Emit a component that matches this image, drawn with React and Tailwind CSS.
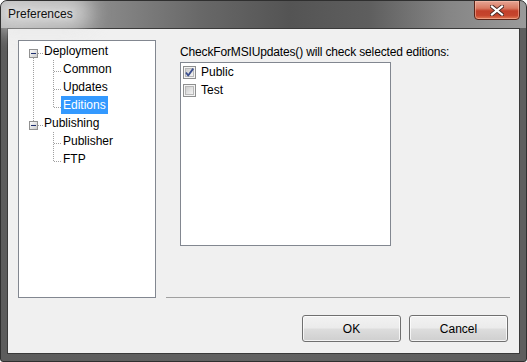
import React from "react";

const FONT = "font-['Liberation_Sans',Arial,sans-serif]";

function CheckBox({ checked }) {
  return (
    <svg width="13" height="13" viewBox="0 0 13 13" className="flex-none">
      <defs>
        <linearGradient id="cbfill" x1="0" y1="0" x2="1" y2="1">
          <stop offset="0" stopColor="#cbcbcb" />
          <stop offset="1" stopColor="#f6f6f6" />
        </linearGradient>
      </defs>
      <rect x="0.5" y="0.5" width="12" height="12" fill="#f4f4f4" stroke="#8e8f8f" />
      <rect x="2.5" y="2.5" width="8" height="8" fill="url(#cbfill)" stroke="#b8b8b8" />
      {checked && (
        <path d="M3 6.5 L5.2 9.5 L10.2 2.6" fill="none" stroke="#3b4f8f" strokeWidth="1.8" strokeLinejoin="round" />
      )}
    </svg>
  );
}

function Expander({ x, y }) {
  return (
    <g>
      <rect x={x + 0.5} y={y + 0.5} width="8" height="8" fill="url(#exfill)" stroke="#919191" shapeRendering="crispEdges" />
      <line x1={x + 2} y1={y + 4.5} x2={x + 7} y2={y + 4.5} stroke="#1f2f6f" shapeRendering="crispEdges" />
    </g>
  );
}

function TreeLines() {
  const dot = { stroke: "#a0a0a0", strokeDasharray: "1 1", shapeRendering: "crispEdges" };
  return (
    <svg width="138" height="258" className="pointer-events-none absolute left-0 top-0">
      <defs>
        <linearGradient id="exfill" x1="0" y1="0" x2="1" y2="1">
          <stop offset="0" stopColor="#ffffff" />
          <stop offset="1" stopColor="#c8c8c8" />
        </linearGradient>
      </defs>
      {/* root connector */}
      <line x1="14.5" y1="17" x2="14.5" y2="80" style={dot} />
      <line x1="19" y1="12.5" x2="24" y2="12.5" style={dot} />
      <line x1="19" y1="84.5" x2="24" y2="84.5" style={dot} />
      {/* Deployment children */}
      <line x1="34.5" y1="19" x2="34.5" y2="67" style={dot} />
      {[30, 48, 66].map((y) => (
        <line key={y} x1="35" y1={y + 0.5} x2="42" y2={y + 0.5} style={dot} />
      ))}
      {/* Publishing children */}
      <line x1="34.5" y1="91" x2="34.5" y2="121" style={dot} />
      {[102, 120].map((y) => (
        <line key={y} x1="35" y1={y + 0.5} x2="42" y2={y + 0.5} style={dot} />
      ))}
      <Expander x={10} y={8} />
      <Expander x={10} y={80} />
    </svg>
  );
}

function TreeRow({ label, level, selected }) {
  return (
    <div className={`flex h-[18px] items-center ${level === 0 ? "pl-[23px]" : "pl-[42px]"}`}>
      <span className={`px-[2px] leading-[18px] ${selected ? "bg-[#3399ff] text-white" : "text-black"}`}>{label}</span>
    </div>
  );
}

function Button({ children }) {
  return (
    <button className="flex h-[27px] w-[99px] items-center justify-center rounded-[3px] border border-[#707070] bg-[linear-gradient(to_bottom,#f2f2f2_0%,#ebebeb_48%,#dddddd_52%,#cfcfcf_100%)] text-[12px] text-black shadow-[inset_0_0_0_1px_rgba(255,255,255,0.75)]">
      {children}
    </button>
  );
}

export default function App() {
  return (
    <div className={`h-[362px] w-[527px] bg-white ${FONT} text-[12px]`}>
      <div className="flex h-[362px] w-[527px] flex-col overflow-hidden rounded-t-[7px] rounded-b-[3px] border border-[#2f2f2f] bg-[linear-gradient(to_right,#5c5c5c,#626262_50%,#5e5e5e)]">
        {/* title bar */}
        <div className="relative flex h-[27px] flex-none items-start bg-[linear-gradient(to_right,#a9a9a9_0%,#8c8c8c_18%,#686868_38%,#545454_55%,#5e5e5e_70%,#858585_85%,#9a9a9a_100%)]">
          <div className="absolute left-[-10px] top-[-6px] h-[36px] w-[100px] rounded-full bg-[#e6e6e6] opacity-70 blur-[10px]" />
          <span className="relative ml-[7px] mt-[6px] text-[12px] leading-[15px] text-[#111] [text-shadow:0_0_6px_#fff]">Preferences</span>
          <div className="absolute right-[6px] top-[-1px] flex h-[20px] w-[46px] items-center justify-center rounded-b-[4px] border border-[#5a2418] bg-[linear-gradient(to_bottom,#e6a595_0%,#d97a62_40%,#c2402a_55%,#c5452d_80%,#e07a55_100%)] shadow-[inset_0_0_0_1px_rgba(255,200,180,0.5)]">
            <svg width="14" height="11" viewBox="0 0 14 11">
              <path d="M2 1.5 L12 9.5 M12 1.5 L2 9.5" stroke="#4a2a24" strokeWidth="4" strokeLinecap="square" />
              <path d="M2 1.5 L12 9.5 M12 1.5 L2 9.5" stroke="#ffffff" strokeWidth="2.2" strokeLinecap="square" />
            </svg>
          </div>
        </div>

        {/* client area */}
        <div className="mx-[6px] mb-[7px] flex flex-1 flex-col border border-[#3a3a3a] bg-[#f0f0f0] pl-[10px] pr-[9px] pt-[11px]">
          <div className="flex h-[258px]">
            <div className="relative h-[258px] w-[138px] flex-none border border-[#828790] bg-white pt-[1px]">
              <TreeLines />
              <TreeRow label="Deployment" level={0} />
              <TreeRow label="Common" level={1} />
              <TreeRow label="Updates" level={1} />
              <TreeRow label="Editions" level={1} selected />
              <TreeRow label="Publishing" level={0} />
              <TreeRow label="Publisher" level={1} />
              <TreeRow label="FTP" level={1} />
            </div>
            <div className="ml-[10px] flex flex-1 flex-col">
              <div className="mt-[4px] h-[16px] pl-[14px] leading-[16px] tracking-[-0.15px] text-black">CheckForMSIUpdates() will check selected editions:</div>
              <div className="ml-[14px] mt-[2px] h-[184px] w-[211px] border border-[#828790] bg-white pl-[2px]">
                <div className="flex h-[18px] items-center gap-[5px]">
                  <CheckBox checked />
                  <span className="leading-[18px]">Public</span>
                </div>
                <div className="flex h-[18px] items-center gap-[5px]">
                  <CheckBox />
                  <span className="leading-[18px]">Test</span>
                </div>
              </div>
              <div className="flex-1" />
              <div className="h-px bg-[#a0a0a0]" />
            </div>
          </div>
          <div className="mr-[2px] mt-[17px] flex justify-end gap-[8px]">
            <Button>OK</Button>
            <Button>Cancel</Button>
          </div>
        </div>
      </div>
    </div>
  );
}
